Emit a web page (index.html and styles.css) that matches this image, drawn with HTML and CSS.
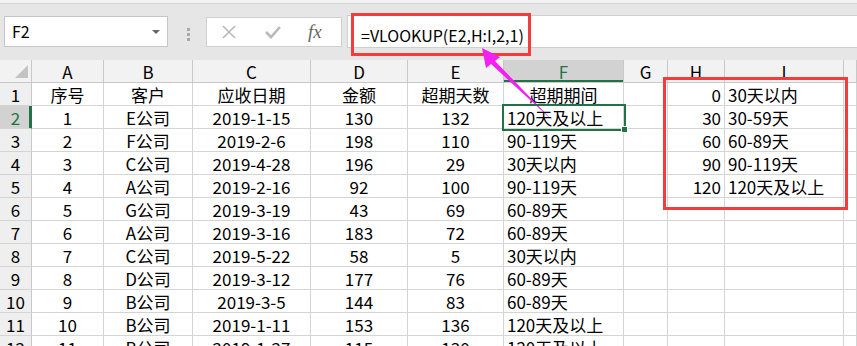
FILE: index.html
```html
<!DOCTYPE html>
<html>
<head>
    <meta charset="utf-8"/>
    <title>VLOOKUP</title>
    <link rel="stylesheet" href="styles.css">
</head>
<body>
<div class="page">

    <div class="top-strip"></div>
    <div class="toolbar">
        <div class="name-box">F2<span class="caret"></span></div>
        <div class="grip"><i></i><i></i><i></i></div>
        <div class="fx-group">
            <svg class="ico-x" width="16" height="16" viewBox="0 0 16 16"><path d="M2 2L14 14M14 2L2 14" stroke="#b9b9b9" stroke-width="1.6" fill="none"/></svg>
            <svg class="ico-ok" width="18" height="16" viewBox="0 0 18 16"><path d="M2 8L7 13L16 3" stroke="#b9b9b9" stroke-width="2.6" fill="none"/></svg>
            <span class="fx">fx</span>
        </div>
        <div class="formula">=VLOOKUP(E2,H:I,2,1)</div>
    </div>

    <div class="sheet">
        <div class="hd corner"><svg width="31" height="22" viewBox="0 0 31 22"><path d="M15 18L28 18L28 5Z" fill="#c3c3c3"/></svg></div>
        <div class="hd">A</div><div class="hd">B</div><div class="hd">C</div><div class="hd">D</div><div class="hd">E</div>
        <div class="hd hd-on">F</div><div class="hd">G</div><div class="hd">H</div><div class="hd">I</div><div class="hd"></div>

        <div class="rh">1</div>
        <div class="c">序号</div><div class="c">客户</div><div class="c">应收日期</div><div class="c">金额</div><div class="c">超期天数</div><div class="c">超期期间</div>
        <div class="c"></div><div class="c r">0</div><div class="c l">30天以内</div><div class="c"></div>

        <div class="rh rh-on">2</div>
        <div class="c">1</div><div class="c">E公司</div><div class="c">2019-1-15</div><div class="c">130</div><div class="c">132</div><div class="c l sel">120天及以上</div>
        <div class="c"></div><div class="c r">30</div><div class="c l">30-59天</div><div class="c"></div>

        <div class="rh">3</div>
        <div class="c">2</div><div class="c">F公司</div><div class="c">2019-2-6</div><div class="c">198</div><div class="c">110</div><div class="c l">90-119天</div>
        <div class="c"></div><div class="c r">60</div><div class="c l">60-89天</div><div class="c"></div>

        <div class="rh">4</div>
        <div class="c">3</div><div class="c">C公司</div><div class="c">2019-4-28</div><div class="c">196</div><div class="c">29</div><div class="c l">30天以内</div>
        <div class="c"></div><div class="c r">90</div><div class="c l">90-119天</div><div class="c"></div>

        <div class="rh">5</div>
        <div class="c">4</div><div class="c">A公司</div><div class="c">2019-2-16</div><div class="c">92</div><div class="c">100</div><div class="c l">90-119天</div>
        <div class="c"></div><div class="c r">120</div><div class="c l">120天及以上</div><div class="c"></div>

        <div class="rh">6</div>
        <div class="c">5</div><div class="c">G公司</div><div class="c">2019-3-19</div><div class="c">43</div><div class="c">69</div><div class="c l">60-89天</div>
        <div class="c"></div><div class="c"></div><div class="c"></div><div class="c"></div>

        <div class="rh">7</div>
        <div class="c">6</div><div class="c">A公司</div><div class="c">2019-3-16</div><div class="c">183</div><div class="c">72</div><div class="c l">60-89天</div>
        <div class="c"></div><div class="c"></div><div class="c"></div><div class="c"></div>

        <div class="rh">8</div>
        <div class="c">7</div><div class="c">C公司</div><div class="c">2019-5-22</div><div class="c">58</div><div class="c">5</div><div class="c l">30天以内</div>
        <div class="c"></div><div class="c"></div><div class="c"></div><div class="c"></div>

        <div class="rh">9</div>
        <div class="c">8</div><div class="c">D公司</div><div class="c">2019-3-12</div><div class="c">177</div><div class="c">76</div><div class="c l">60-89天</div>
        <div class="c"></div><div class="c"></div><div class="c"></div><div class="c"></div>

        <div class="rh">10</div>
        <div class="c">9</div><div class="c">B公司</div><div class="c">2019-3-5</div><div class="c">144</div><div class="c">83</div><div class="c l">60-89天</div>
        <div class="c"></div><div class="c"></div><div class="c"></div><div class="c"></div>

        <div class="rh">11</div>
        <div class="c">10</div><div class="c">B公司</div><div class="c">2019-1-11</div><div class="c">153</div><div class="c">136</div><div class="c l">120天及以上</div>
        <div class="c"></div><div class="c"></div><div class="c"></div><div class="c"></div>

        <div class="rh">12</div>
        <div class="c">11</div><div class="c">B公司</div><div class="c">2019-1-27</div><div class="c">115</div><div class="c">130</div><div class="c l">120天及以上</div>
        <div class="c"></div><div class="c"></div><div class="c"></div><div class="c"></div>
    </div>

    <!-- annotations drawn over the sheet -->
    <div class="mark mark-formula"></div>
    <div class="mark mark-table"></div>
    <svg class="arrow" width="857" height="346" viewBox="0 0 857 346">
        <polygon points="482,48 500,57 495,61 553,121 491,64 486,68" fill="#f31ff3"/>
    </svg>

</div>
</body>
</html>
```

FILE: styles.css
```css
body {
    margin: 0px;
    padding: 0px;
    background-color: #fff;
    font-family: "Noto Sans CJK SC", "DejaVu Sans", sans-serif;
    color: #000;
}

.page {
    position: relative;
    width: 857px;
    height: 346px;
    overflow: hidden;
}

/* formula bar */
.top-strip {
    height: 3px;
    background-color: #f3f3f3;
    border-bottom: 1px solid #d4d4d4;
}
.toolbar {
    display: flex;
    align-items: flex-start;
    height: 56px;
    background-color: #e6e6e6;
}
.name-box {
    position: relative;
    margin: 12px 0 0 4px;
    width: 164px;
    height: 31px;
    box-sizing: border-box;
    background-color: #fff;
    border: 1px solid #c6c6c6;
    padding-left: 7px;
    font-size: 16px;
    line-height: 29px;
}
.caret {
    position: absolute;
    right: 7px;
    top: 13px;
    border-left: 4px solid transparent;
    border-right: 4px solid transparent;
    border-top: 4px solid #666;
}
.grip {
    display: flex;
    flex-direction: column;
    gap: 2px;
    margin: 24px 0 0 19px;
}
.grip i {
    display: block;
    width: 3px;
    height: 3px;
    background-color: #a9a9a9;
}
.fx-group {
    display: flex;
    align-items: center;
    margin: 13px 0 0 16px;
    width: 136px;
    height: 30px;
    box-sizing: border-box;
    background-color: #fff;
    border: 1px solid #cfcfcf;
}
.ico-x { margin-left: 14px; }
.ico-ok { margin-left: 27px; }
.fx {
    margin-left: 26px;
    font-family: "Liberation Serif", serif;
    font-style: italic;
    font-size: 19px;
    color: #666;
}
.formula {
    flex: 1;
    margin: 11px 0 0 5px;
    height: 33px;
    box-sizing: border-box;
    background-color: #fff;
    border: 1px solid #cfcfcf;
    border-right: 0px;
    padding-left: 13px;
    font-size: 16px;
    line-height: 38px;
}

/* sheet grid */
.sheet {
    display: grid;
    grid-template-columns: 32px 72px 89px 118px 97px 96px 120px 44px 57px 119px 1fr;
    grid-auto-rows: 23px;
    font-size: 17px;
}
.sheet > div {
    box-sizing: border-box;
    border-right: 1px solid #d4d4d4;
    border-bottom: 1px solid #d4d4d4;
    white-space: nowrap;
    overflow: hidden;
    line-height: 24px;
    text-align: center;
}
.sheet .hd {
    background-color: #f2f2f2;
    border-right-color: #c8c8c8;
    border-bottom-color: #c8c8c8;
}
.sheet .corner { line-height: 0px; }
.sheet .rh {
    background-color: #efefef;
    border-right-color: #c8c8c8;
    border-bottom-color: #d4d4d4;
}
.sheet .hd-on {
    background-color: #d2d2d2;
    color: #217346;
    box-shadow: inset 0 -2px 0 #217346;
}
.sheet .rh-on {
    background-color: #d2d2d2;
    color: #217346;
    box-shadow: inset -2px 0 0 #217346;
    border-right-color: #217346;
}
.sheet .l { text-align: left; padding-left: 3px; }
.sheet .r { text-align: right; padding-right: 3px; }
.sheet .sel {
    position: relative;
    overflow: visible;
    z-index: 1;
    outline: 2px solid #217346;
}
.sel::after {
    content: "";
    position: absolute;
    right: -5px;
    bottom: -5px;
    width: 5px;
    height: 5px;
    background-color: #217346;
    border: 1px solid #fff;
}

/* annotations */
.mark {
    position: absolute;
    border: 3px solid #f43c3c;
    box-sizing: border-box;
}
.mark-formula {
    left: 351px;
    top: 13px;
    width: 180px;
    height: 43px;
}
.mark-table {
    left: 663px;
    top: 77px;
    width: 185px;
    height: 133px;
}
.arrow {
    position: absolute;
    left: 0px;
    top: 0px;
    pointer-events: none;
}
```
